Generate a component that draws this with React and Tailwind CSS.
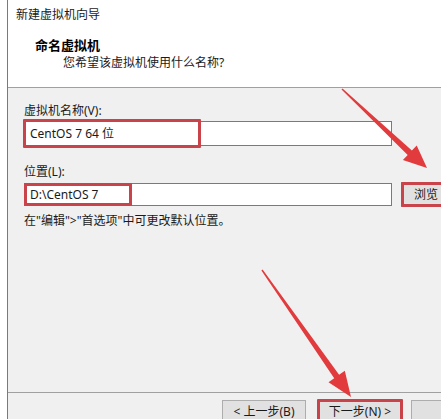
import React from "react";

const font = { fontFamily: '"Noto Sans", "Noto Sans CJK SC", sans-serif' };

const RedBox = ({ className }) => (
  <div className={`absolute border-[3px] border-[#c8434a] rounded-[1px] pointer-events-none ${className}`} />
);

const Arrows = () => (
  <svg className="absolute inset-0 pointer-events-none" width="441" height="419" viewBox="0 0 441 419">
    {/* arrow to browse button */}
    <polygon
      points="342.5,88.5 411.9,150.6 416.7,145.5 427,168 402.9,160.1 407.7,155 341.5,89.5"
      fill="#e23b3d"
    />
    {/* arrow to next button */}
    <polygon
      points="262.6,269.6 339.1,374.8 344.8,370.8 351,397 328.5,382.2 334.2,378.2 261.4,270.4"
      fill="#e23b3d"
    />
  </svg>
);

export default function App() {
  return (
    <div className="relative w-[441px] h-[419px] overflow-hidden bg-white text-[12px] text-[#1a1a1a] flex" style={font}>
      <div className="w-[7px] shrink-0 bg-white" />
      <div className="flex-1 min-w-0 overflow-hidden flex flex-col border-l border-[#7a7a7a]">
        {/* title */}
        <div className="h-[30px] shrink-0 bg-white flex items-center pl-[8px]">新建虚拟机向导</div>
        {/* header */}
        <div className="h-[58px] shrink-0 bg-white border-b border-[#a0a0a0] pl-[27px] pt-[6px]">
          <div className="font-bold text-[13px] leading-[18px] text-black">命名虚拟机</div>
          <div className="pl-[28px] leading-[18px]">您希望该虚拟机使用什么名称?</div>
        </div>

        {/* body */}
        <div className="flex-1 bg-[#f0f0f0] pl-[16px] pt-[14px]">
          <div className="leading-[18px]">虚拟机名称(V):</div>
          <div className="relative mt-[1px] w-[368px] h-[25px] bg-white border border-[#7a7a7a] flex items-center pl-[5px]">
            CentOS 7 64 位
            <RedBox className="-left-[2px] -top-[3px] w-[178px] h-[29px]" />
          </div>

          <div className="mt-[17px] leading-[18px]">位置(L):</div>
          <div className="flex items-center mt-[1px]">
            <div className="relative w-[368px] shrink-0 h-[23px] bg-white border border-[#7a7a7a] flex items-center pl-[5px]">
              D:\CentOS 7
              <RedBox className="-left-[1px] -top-[1px] w-[108px] h-[23px]" />
            </div>
            <div className="relative ml-[9px] w-[60px] h-[25px] bg-[#e1e1e1] border border-[#adadad] flex items-center pl-[12px] shrink-0">
              浏览
              <RedBox className="-left-[1px] -top-[1px] w-[60px] h-[25px]" />
            </div>
          </div>

          <div className="mt-[5px] leading-[18px]">在"编辑"&gt;"首选项"中可更改默认位置。</div>
        </div>

        {/* footer */}
        <div className="h-[27px] shrink-0 bg-[#f0f0f0] border-t border-[#a0a0a0] flex items-start pt-[7px] pl-[214px]">
          <div className="w-[84px] h-[24px] shrink-0 bg-[#e1e1e1] border border-[#adadad] flex items-center justify-center">
            &lt; 上一步(B)
          </div>
          <div className="relative ml-[12px] w-[84px] h-[24px] shrink-0 bg-[#e1e1e1] border border-[#adadad] flex items-center justify-center">
            下一步(N) &gt;
            <RedBox className="-left-[2px] -top-[2px] w-[86px] h-[26px]" />
          </div>
          <div className="ml-[9px] w-[84px] h-[24px] shrink-0 bg-[#e1e1e1] border border-[#adadad]" />
        </div>
      </div>
      <Arrows />
    </div>
  );
}
